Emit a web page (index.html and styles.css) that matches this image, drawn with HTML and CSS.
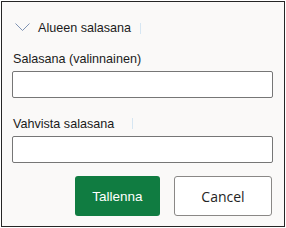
FILE: index.html
```html
<!DOCTYPE html>
<html lang="fi">

<head>
    <meta charset="UTF-8">
    <meta name="viewport" content="width=device-width, initial-scale=1.0">
    <title>Alueen salasana</title>
    <link rel="stylesheet" href="styles.css">
</head>

<body>

    <div class="panel">
        <!-- Section header -->
        <div class="section-header">
            <svg class="chevron" width="15" height="9" viewBox="0 0 15 9">
                <polyline points="0.5,0.5 7.5,7.5 14.5,0.5" fill="none" stroke="#7f93b3" stroke-width="1"/>
            </svg>
            <span class="section-title">Alueen salasana</span>
            <span class="caret"></span>
        </div>

        <label class="field-label" for="password">Salasana (valinnainen)</label>
        <input type="password" id="password" class="field-input">

        <label class="field-label second" for="confirm">Vahvista salasana<span class="caret"></span></label>
        <input type="password" id="confirm" class="field-input">

        <div class="actions">
            <button class="btn btn-primary">Tallenna</button>
            <button class="btn btn-secondary">Cancel</button>
        </div>
    </div>

</body>

</html>
```

FILE: styles.css
```css
* {
    margin: 0;
    padding: 0;
    box-sizing: border-box;
}

body {
    background-color: #fff;
    font-family: "Liberation Sans", Arial, sans-serif;
    color: #1b1b1b;
}

.panel {
    margin: 1px;
    width: 284px;
    height: 226px;
    border: 1px solid #262626;
    background-color: #faf9f8;
    padding: 17px 11px 0 10px;
}

/* Header */
.section-header {
    display: flex;
    align-items: center;
    height: 18px;
    font-size: 12.6px;
}

.chevron {
    margin-left: 3px;
    margin-right: 8px;
    margin-top: -2px;
}

.caret {
    display: inline-block;
    width: 1px;
    height: 11px;
    background-color: #d6e6f2;
    margin-left: 9px;
}

/* Fields */
.field-label {
    display: block;
    font-size: 12.6px;
    line-height: 16px;
    margin-top: 14px;
    margin-bottom: 4px;
    padding-left: 1px;
}

.field-label.second {
    margin-top: 18px;
}

.field-label .caret {
    margin-left: 18px;
    vertical-align: -1px;
}

.field-input {
    display: block;
    width: 261px;
    height: 27px;
    border: 1px solid #767676;
    border-radius: 2px;
    background-color: #fff;
}

/* Buttons */
.actions {
    display: flex;
    justify-content: flex-end;
    gap: 14px;
    margin-top: 13px;
    padding-right: 1px;
}

.btn {
    height: 40px;
    border-radius: 3px;
    cursor: pointer;
}

.btn-primary {
    width: 85px;
    background-color: #107c41;
    color: #fff;
    border: none;
    font-family: "Liberation Sans", Arial, sans-serif;
    font-size: 13.5px;
}

.btn-secondary {
    width: 98px;
    background-color: #fff;
    color: #242424;
    border: 1px solid #8a8886;
    font-family: "Open Sans", sans-serif;
    font-size: 14px;
}
```
